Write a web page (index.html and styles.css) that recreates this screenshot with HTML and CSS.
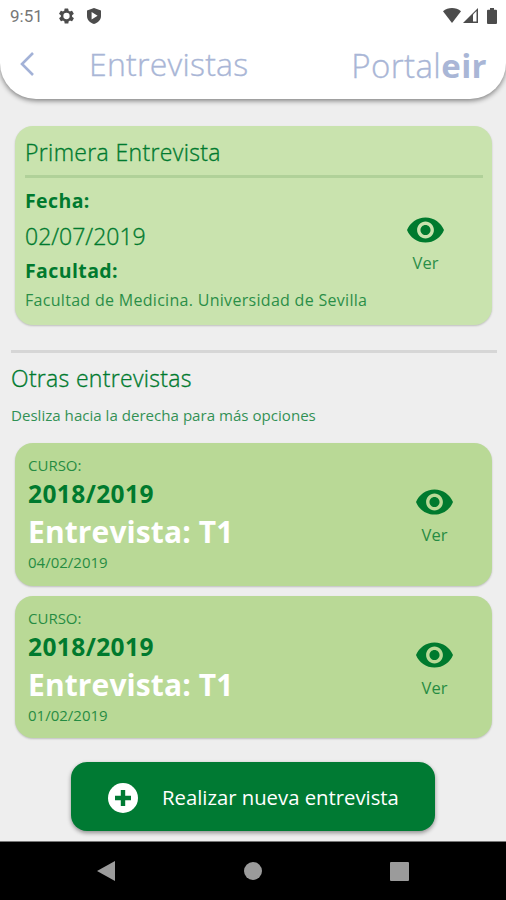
FILE: index.html
```html
<!DOCTYPE html>
<html lang="es">
<head>
  <meta charset="UTF-8">
  <meta name="viewport" content="width=device-width, initial-scale=1.0">
  <title>Entrevistas - Portaleir</title>
  <link rel="stylesheet" href="styles.css">
</head>
<body>
  <svg width="0" height="0" class="defs">
    <symbol id="eye" viewBox="1 4.5 22 15">
      <path d="M12 4.5C7 4.5 2.73 7.61 1 12c1.73 4.39 6 7.5 11 7.5s9.27-3.11 11-7.5c-1.73-4.39-6-7.5-11-7.5zM12 17c-2.76 0-5-2.24-5-5s2.24-5 5-5 5 2.24 5 5-2.24 5-5 5zm0-8c-1.66 0-3 1.34-3 3s1.34 3 3 3 3-1.34 3-3-1.34-3-3-3z"/>
    </symbol>
  </svg>

  <header class="header">
    <div class="status-bar">
      <span class="clock">9:51</span>
      <svg class="gear" viewBox="2 2 20 20" width="15" height="16"><path d="M19.4 13a7.5 7.5 0 0 0 0-2l2.1-1.6c.2-.2.2-.4.1-.6l-2-3.5c-.1-.2-.4-.3-.6-.2l-2.5 1a7.3 7.3 0 0 0-1.7-1l-.4-2.6a.5.5 0 0 0-.5-.5h-4a.5.5 0 0 0-.5.4L9 5.1a7.7 7.7 0 0 0-1.7 1l-2.5-1c-.2-.1-.5 0-.6.2l-2 3.5c-.1.2-.1.5.1.6L4.5 11a7.9 7.9 0 0 0 0 2l-2.1 1.6c-.2.2-.2.4-.1.6l2 3.5c.1.2.4.3.6.2l2.5-1c.5.4 1.1.7 1.7 1l.4 2.6c0 .3.2.5.5.5h4c.3 0 .5-.2.5-.5l.4-2.6c.6-.3 1.2-.6 1.7-1l2.5 1c.2.1.5 0 .6-.2l2-3.5c.1-.2.1-.5-.1-.6zM12 16.2a4.2 4.2 0 1 1 0-8.4 4.2 4.2 0 0 1 0 8.4z"/></svg>
      <svg class="shield" viewBox="0 0 14 16" width="14" height="16"><path fill-rule="evenodd" d="M7 0l7 2.6v5.4c0 3.8-3 6.8-7 8-4-1.2-7-4.2-7-8V2.6zM4.6 4.1v7.4l6-3.7z"/></svg>
      <span class="spacer"></span>
      <svg viewBox="0 0 18 15" width="18" height="15"><path d="M0 3.2C5-1 13-1 18 3.2L9 15z"/></svg>
      <svg class="signal" viewBox="0 0 15 15" width="15" height="15"><path d="M0 15L15 0v15z"/><path fill="#fff" d="M10 6.5l3.5-3.5v10.5H10z"/></svg>
      <svg class="battery" viewBox="0 0 10 16" width="10" height="16"><path d="M3 0h4v1.7h2a1 1 0 0 1 1 1V15a1 1 0 0 1-1 1H1a1 1 0 0 1-1-1V2.7a1 1 0 0 1 1-1h2z"/></svg>
    </div>
    <div class="title-bar">
      <svg class="back" viewBox="0 0 14 24" width="14" height="24"><path d="M13 1L2 12l11 11"/></svg>
      <h1 class="title">Entrevistas</h1>
      <div class="logo">Portal<b>eir</b></div>
    </div>
  </header>

  <main class="content">
    <section class="card first-card">
      <h2 class="card-title">Primera Entrevista</h2>
      <div class="first-body">
        <div class="info">
          <div class="label">Fecha:</div>
          <div class="value">02/07/2019</div>
          <div class="label">Facultad:</div>
          <div class="faculty">Facultad de Medicina. Universidad de Sevilla</div>
        </div>
        <div class="view">
          <svg width="37" height="26"><use href="#eye"/></svg>
          <span>Ver</span>
        </div>
      </div>
    </section>

    <section class="others">
      <h2 class="others-title">Otras entrevistas</h2>
      <p class="hint">Desliza hacia la derecha para más opciones</p>
    </section>

    <section class="card interview">
      <div class="info">
        <div class="small">CURSO:</div>
        <div class="year">2018/2019</div>
        <div class="name">Entrevista: T1</div>
        <div class="small">04/02/2019</div>
      </div>
      <div class="view">
        <svg width="37" height="26"><use href="#eye"/></svg>
        <span>Ver</span>
      </div>
    </section>

    <section class="card interview">
      <div class="info">
        <div class="small">CURSO:</div>
        <div class="year">2018/2019</div>
        <div class="name">Entrevista: T1</div>
        <div class="small">01/02/2019</div>
      </div>
      <div class="view">
        <svg width="37" height="26"><use href="#eye"/></svg>
        <span>Ver</span>
      </div>
    </section>

    <button class="new-button">
      <svg viewBox="0 0 30 30" width="30" height="30"><circle cx="15" cy="15" r="15" fill="#fff"/><path d="M15 7v16M7 15h16" stroke="#007a33" stroke-width="4.4"/></svg>
      <span>Realizar nueva entrevista</span>
    </button>
  </main>

  <nav class="nav-bar">
    <svg viewBox="0 0 18 20" width="18" height="20"><path d="M18 0v20L0 10z"/></svg>
    <svg viewBox="0 0 18 18" width="18" height="18"><circle cx="9" cy="9" r="9"/></svg>
    <svg viewBox="0 0 19 19" width="19" height="19"><rect width="19" height="19" rx="1"/></svg>
  </nav>
</body>
</html>
```
FILE: styles.css
```css
* {
  box-sizing: border-box;
}

body {
  margin: 0;
  height: 900px;
  display: flex;
  flex-direction: column;
  overflow: hidden;
  background-color: #eeeeee;
  color: #007a2e;
  font-family: 'Open Sans', sans-serif;
  font-weight: 300;
}

h1, h2, p {
  margin: 0;
  font-weight: 300;
}

svg {
  display: block;
  flex: none;
}

.defs {
  position: absolute;
}

.header {
  height: 99px;
  flex: none;
  background-color: #fff;
  border-radius: 0 0 36px 36px;
  box-shadow: 0 2px 5px rgba(0, 0, 0, 0.45);
}

.status-bar {
  height: 31px;
  padding: 0 9px 0 10px;
  display: flex;
  align-items: center;
  fill: #4c4c4c;
}

.clock {
  width: 49px;
  color: #777;
  font-family: Roboto, sans-serif;
  font-size: 17px;
  font-weight: 400;
}

.shield {
  margin-left: 13px;
}

.spacer {
  flex: 1;
}

.signal {
  margin-left: 2px;
}

.battery {
  margin-left: 9px;
}

.title-bar {
  height: 68px;
  padding: 0 19px 0 20px;
  display: flex;
  align-items: center;
  color: #a9b6d6;
}

.back {
  margin-top: -2px;
  fill: none;
  stroke: #a3b2d7;
  stroke-width: 2.6;
}

.title, .logo, .card-title, .others-title, .value {
  -webkit-text-stroke: 0.35px currentColor;
}

.title {
  margin: -2px 0 0 55px;
  font-size: 32px;
  letter-spacing: 0.25px;
  line-height: 64px;
}

.logo {
  margin: 2px 0 0 auto;
  font-size: 33px;
  letter-spacing: 0.4px;
  line-height: 66px;
}

.logo b {
  font-weight: 700;
  -webkit-text-stroke: 0;
}

.content {
  flex: 1;
  display: flex;
  flex-direction: column;
}

.card {
  margin: 0 14px 0 15px;
  border-radius: 18px;
  box-shadow: 0 1px 2px rgba(0, 0, 0, 0.2);
}

.first-card {
  height: 199px;
  margin-top: 27px;
  padding: 11px 9px 0 10px;
  background-color: #c9e3ae;
}

.card-title {
  padding-bottom: 8px;
  border-bottom: 3px solid #b0d199;
  font-size: 23px;
  letter-spacing: 0.35px;
  line-height: 30px;
}

.first-body {
  display: flex;
  justify-content: space-between;
}

.label {
  margin-top: 6px;
  font-size: 19.5px;
  font-weight: 700;
  letter-spacing: 0.4px;
  line-height: 28px;
}

.label:first-child {
  margin-top: 9px;
}

.value {
  margin-top: 6px;
  font-size: 23px;
  line-height: 30px;
}

.faculty {
  margin-top: 4px;
  font-size: 16px;
  font-weight: 400;
  letter-spacing: 0.3px;
  line-height: 22px;
  white-space: nowrap;
  opacity: 0.8;
}

.view {
  display: flex;
  flex-direction: column;
  align-items: center;
  fill: #007a2e;
  font-size: 16.5px;
  font-weight: 400;
  line-height: 22px;
}

.view span {
  margin-top: 9px;
  opacity: 0.8;
}

.first-body .view {
  margin: 39px 39px 0 0;
}

.others {
  height: 93px;
  margin: 25px 9px 0 11px;
  border-top: 3px solid #d6d6d6;
}

.others-title {
  margin-top: 10px;
  font-size: 23px;
  letter-spacing: 0.3px;
  line-height: 30px;
}

.hint {
  margin-top: 11px;
  font-size: 15.1px;
  font-weight: 400;
  line-height: 22px;
  opacity: 0.8;
}

.interview {
  height: 143px;
  margin-bottom: 10px;
  padding: 0 39px 0 13px;
  display: flex;
  justify-content: space-between;
  background-color: #b9d996;
}

.interview + .interview {
  height: 142px;
}

.interview .info {
  padding-top: 11px;
}

.interview .view {
  padding-top: 46px;
}

.small {
  font-size: 15px;
  font-weight: 400;
  line-height: 22px;
  opacity: 0.8;
}

.year {
  font-size: 24.5px;
  font-weight: 700;
  letter-spacing: 0.4px;
  line-height: 35px;
}

.name {
  color: #fff;
  font-size: 30px;
  font-weight: 700;
  letter-spacing: 0.1px;
  line-height: 41px;
}

.name + .small {
  margin-top: -1px;
}

.new-button {
  width: 364px;
  height: 69px;
  margin: 14px 0 0 71px;
  padding: 0 0 0 37px;
  display: flex;
  align-items: center;
  border: none;
  border-radius: 16px;
  background-color: #007a33;
  box-shadow: 0 2px 4px rgba(0, 0, 0, 0.4);
  color: #fff;
  font-family: 'Open Sans', sans-serif;
  font-size: 20.3px;
}

.new-button svg {
  margin: 3px 24px 0 0;
}

.nav-bar {
  height: 59px;
  flex: none;
  padding: 0 97px;
  display: flex;
  align-items: center;
  justify-content: space-between;
  border-top: 1px solid #777;
  background-color: #000;
  fill: #9b9b9b;
}
```
